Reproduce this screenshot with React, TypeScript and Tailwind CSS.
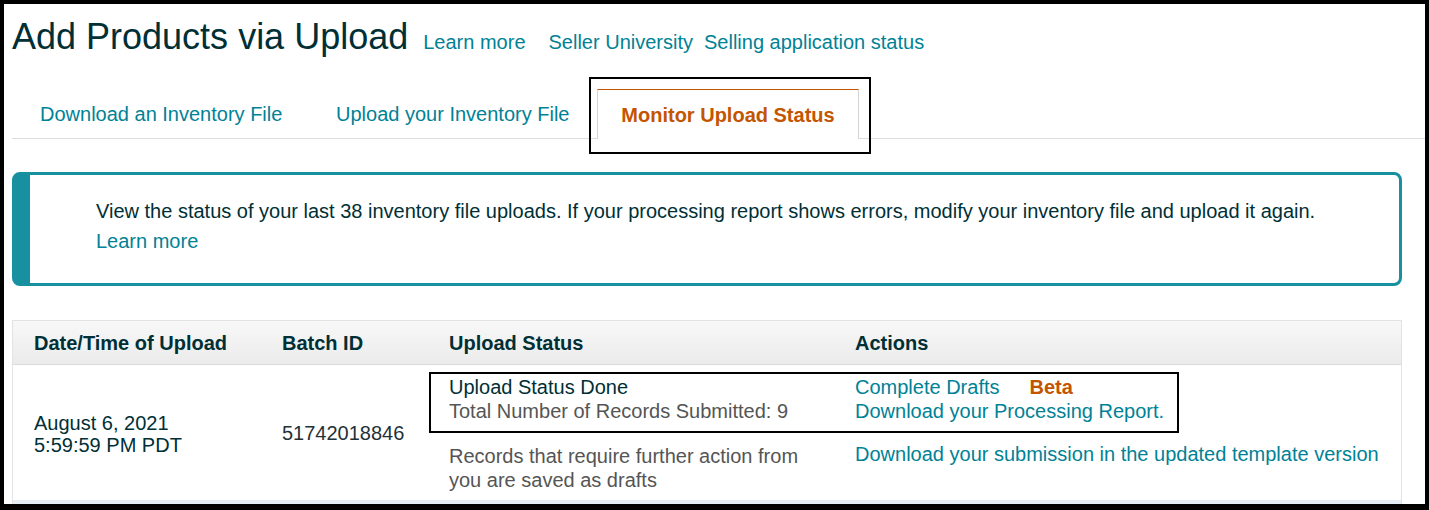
import React from "react";

const font = "font-['Liberation_Sans',Arial,sans-serif]";

export default function App() {
  return (
    <div
      className={`w-[1429px] h-[510px] overflow-hidden bg-white border-black border-l-4 border-t-4 border-r-4 border-b-[6px] ${font}`}
    >
      <div className="pl-2 pr-[23px]">
        {/* Title row */}
        <div className="h-[73px] pt-[11px] flex items-baseline">
          <h1 className="text-[36px] leading-[44px] text-[#002f36] font-normal">
            Add Products via Upload
          </h1>
          <a className="ml-[15px] text-[20px] leading-6 text-[#008296]">Learn more</a>
          <a className="ml-[23px] text-[20px] leading-6 text-[#008296]">Seller University</a>
          <a className="ml-[11px] text-[20px] leading-6 text-[#008296]">
            Selling application status
          </a>
        </div>

        {/* Tabs */}
        <div className="mt-[12px] -mr-[23px] flex items-end border-b border-[#dddddd] h-[50px]">
          <div className="w-[298px] h-[49px] pl-[28px] flex items-center text-[20px] leading-6 text-[#008296]">
            Download an Inventory File
          </div>
          <div className="w-[287px] h-[49px] pl-[26px] flex items-center text-[20px] leading-6 text-[#008296]">
            Upload your Inventory File
          </div>
          <div className="relative w-[262px] h-[50px] -mb-px bg-white border-t border-t-[#c45500] border-x border-x-[#d5d5d5] flex items-center justify-center text-[20px] leading-6 font-bold text-[#c45500]">
            Monitor Upload Status
            <div className="absolute left-[-9px] top-[-13px] w-[282px] h-[77px] border-2 border-black pointer-events-none" />
          </div>
        </div>

        {/* Alert */}
        <div className="mt-[33px] w-[1390px] h-[114px] rounded-[8px] border-[3px] border-l-[18px] border-[#17909f] pl-[66px] pt-[21px] text-[20px] leading-[30px] text-[#002f36]">
          <div className="whitespace-nowrap">
            View the status of your last 38 inventory file uploads. If your processing report shows errors, modify your inventory file and upload it again.
          </div>
          <a className="text-[#008296]">Learn more</a>
        </div>

        {/* Table */}
        <div className="mt-[34px] w-[1390px] border-x border-t border-[#e3e3e3]">
          <div className="grid grid-cols-[248px_167px_406px_1fr] h-[44px] border-b border-[#d9d9d9] bg-gradient-to-b from-[#f8f8f8] to-[#ebebeb] text-[20px] leading-6 font-bold text-[#002f36]">
            <div className="pl-[21px] flex items-center">Date/Time of Upload</div>
            <div className="pl-[21px] flex items-center">Batch ID</div>
            <div className="pl-[21px] flex items-center">Upload Status</div>
            <div className="pl-[21px] flex items-center">Actions</div>
          </div>
          <div className="relative grid grid-cols-[248px_167px_406px_1fr] h-[135px] text-[20px] leading-6">
            <div className="pl-[21px] pt-[3px] flex items-center leading-[22px] text-[#002f36]">
              <div>
                August 6, 2021
                <br />
                5:59:59 PM PDT
              </div>
            </div>
            <div className="pl-[21px] flex items-center text-[#1f3237]">51742018846</div>
            <div className="pl-[21px] pt-[10px]">
              <div className="text-[#002f36]">Upload Status Done</div>
              <div className="text-[#555555]">Total Number of Records Submitted: 9</div>
              <div className="mt-[21px] text-[#555555]">
                Records that require further action from
                <br />
                you are saved as drafts
              </div>
            </div>
            <div className="pl-[21px] pt-[10px] text-[#008296]">
              <div className="flex">
                <a>Complete Drafts</a>
                <span className="ml-[30px] font-bold text-[#c45500]">Beta</span>
              </div>
              <a className="block">Download your Processing Report.</a>
              <a className="block mt-[19px]">
                Download your submission in the updated template version
              </a>
            </div>
            <div className="absolute left-[416px] top-[7px] w-[750px] h-[61px] border-2 border-black pointer-events-none" />
          </div>
          <div className="h-[4px] bg-[#e6eef5]" />
        </div>
      </div>
    </div>
  );
}
